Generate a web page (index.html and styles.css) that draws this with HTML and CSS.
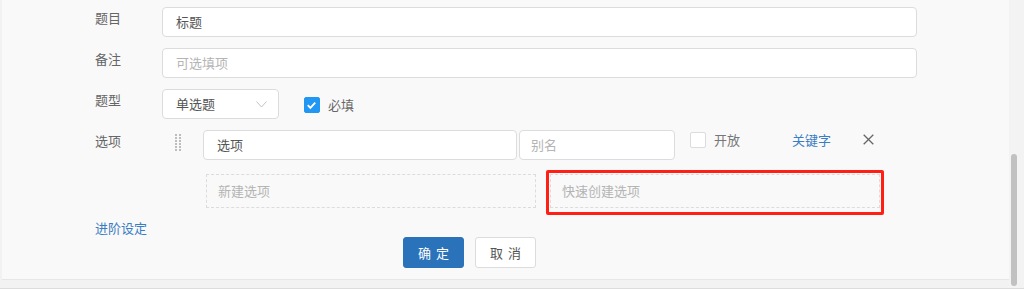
FILE: index.html
```html
<!DOCTYPE html>
<html lang="zh">
<head>
<meta charset="utf-8">
<link rel="stylesheet" href="styles.css">
</head>
<body>
<div class="viewport">
  <div class="pane">
    <div class="panel">
      <div class="form">
        <div class="row">
          <div class="label">题目</div>
          <div class="input wide">标题</div>
        </div>
        <div class="row">
          <div class="label">备注</div>
          <div class="input wide placeholder">可选填项</div>
        </div>
        <div class="row">
          <div class="label">题型</div>
          <div class="input select">
            <span>单选题</span>
            <svg class="chev" width="11" height="7" viewBox="0 0 11 7"><path d="M0.5 0.5 L5.5 6 L10.5 0.5" fill="none" stroke="#c4c4c4" stroke-width="1"/></svg>
          </div>
          <div class="check checked">
            <svg width="16" height="16" viewBox="0 0 16 16"><path d="M4 8.2 L6.8 11 L12 5.5" fill="none" stroke="#fff" stroke-width="2"/></svg>
          </div>
          <span class="check-text">必填</span>
        </div>
        <div class="row">
          <div class="label">选项</div>
          <div class="options">
            <div class="option-line">
              <svg class="handle" width="7" height="17" viewBox="0 0 7 17">
                <g fill="#bdbdbd">
                  <rect x="0" y="0" width="2" height="2"/><rect x="4" y="0" width="2" height="2"/>
                  <rect x="0" y="3" width="2" height="2"/><rect x="4" y="3" width="2" height="2"/>
                  <rect x="0" y="6" width="2" height="2"/><rect x="4" y="6" width="2" height="2"/>
                  <rect x="0" y="9" width="2" height="2"/><rect x="4" y="9" width="2" height="2"/>
                  <rect x="0" y="12" width="2" height="2"/><rect x="4" y="12" width="2" height="2"/>
                  <rect x="0" y="15" width="2" height="2"/><rect x="4" y="15" width="2" height="2"/>
                </g>
              </svg>
              <div class="input opt-name">选项</div>
              <div class="input opt-alias placeholder">别名</div>
              <div class="check open"></div>
              <span class="check-text open-text">开放</span>
              <span class="link keyword">关键字</span>
              <svg class="close" width="11" height="11" viewBox="0 0 11 11"><path d="M0.7 0.7 L10.3 10.3 M10.3 0.7 L0.7 10.3" stroke="#666" stroke-width="1.3" fill="none"/></svg>
            </div>
            <div class="dashed-line">
              <div class="dashed">新建选项</div>
              <div class="dashed quick">快速创建选项<span class="annot"></span></div>
            </div>
          </div>
        </div>
        <div class="link advanced">进阶设定</div>
        <div class="buttons">
          <button class="btn primary">确定</button>
          <button class="btn">取消</button>
        </div>
      </div>
    </div>
  </div>
  <div class="scrollbar"><div class="thumb"></div></div>
</div>
</body>
</html>
```

FILE: styles.css
```css
* { box-sizing: border-box; }
html, body {
  margin: 0;
  padding: 0;
  background: #fff;
  font-family: "Noto Sans CJK SC", "Noto Sans", sans-serif;
  font-size: 13px;
  color: #555;
}
.viewport {
  display: flex;
  height: 289px;
  background: #f2f2f2;
  border-bottom: 1px solid #dcdcdc;
}
.pane {
  flex: 1;
  padding-left: 2px;
}
.panel {
  height: 280px;
  background: #f9f9f9;
  border-bottom: 1px solid #e6e6e6;
}
.scrollbar {
  width: 15px;
  background: #f3f3f3;
  padding-top: 154px;
  padding-left: 2px;
}
.thumb {
  width: 6px;
  height: 132px;
  border-radius: 3px;
  background: #c1c1c1;
}
.form {
  padding-top: 7px;
  padding-left: 93px;
}
.row {
  display: flex;
  align-items: flex-start;
  margin-bottom: 11px;
}
.label {
  width: 67px;
  line-height: 20px;
  padding-top: 1px;
  color: #666;
}
.input {
  height: 30px;
  line-height: 28px;
  border: 1px solid #dcdcdc;
  border-radius: 4px;
  background: #fff;
  padding: 0 13px;
  color: #555;
}
.placeholder { color: #b4b4b4; }
.wide { width: 755px; }
.select {
  width: 117px;
  display: flex;
  align-items: center;
  justify-content: space-between;
  padding-right: 11px;
}
.chev { margin-top: 1px; }
.check {
  width: 16px;
  height: 16px;
  border-radius: 2px;
  border: 1px solid #dcdcdc;
  background: #fff;
}
.checked {
  margin-left: 25px;
  margin-top: 8px;
  background: #2196f3;
  border-color: #2196f3;
  display: flex;
  align-items: center;
  justify-content: center;
}
.checked svg { display: block; margin-left: -1px; }
.check-text {
  margin-left: 8px;
  margin-top: 6px;
  line-height: 20px;
  color: #666;
}
.options {
  display: flex;
  flex-direction: column;
}
.option-line {
  display: flex;
  align-items: center;
}
.handle {
  margin-left: 13px;
  margin-right: 21px;
  margin-top: -6px;
  display: block;
}
.opt-name { width: 314px; padding-left: 13px; }
.opt-alias { width: 156px; margin-left: 2px; padding-left: 11px; }
.open {
  margin-left: 15px;
  margin-top: -11px;
}
.open-text {
  margin-top: -11px;
  color: #777;
}
.link { color: #3b7dc3; }
.keyword {
  margin-left: 52px;
  margin-top: -11px;
  line-height: 20px;
}
.close {
  margin-left: 32px;
  margin-top: -11px;
  display: block;
}
.dashed-line {
  display: flex;
  gap: 14px;
  margin-top: 14px;
  margin-left: 44px;
}
.dashed {
  width: 330px;
  height: 34px;
  line-height: 32px;
  border: 1px dashed #dcdcdc;
  padding-left: 11px;
  color: #b4b4b4;
  position: relative;
}
.quick { width: 330px; padding-left: 11px; }
.annot {
  position: absolute;
  left: -5px;
  top: -5px;
  right: -5px;
  bottom: -8px;
  border: 3px solid #ff1f14;
  border-radius: 2px;
}
.advanced {
  line-height: 18px;
  margin-top: 1px;
}
.buttons {
  display: flex;
  gap: 11px;
  margin-left: 308px;
  margin-top: 0;
}
.btn {
  width: 61px;
  height: 31px;
  border-radius: 3px;
  border: 1px solid #dcdcdc;
  background: #fff;
  color: #555;
  font-family: inherit;
  font-size: 13px;
  letter-spacing: 5px;
  padding: 0 0 0 5px;
}
.btn.primary {
  background: #2a72b9;
  border-color: #2a72b9;
  color: #fff;
}
```
